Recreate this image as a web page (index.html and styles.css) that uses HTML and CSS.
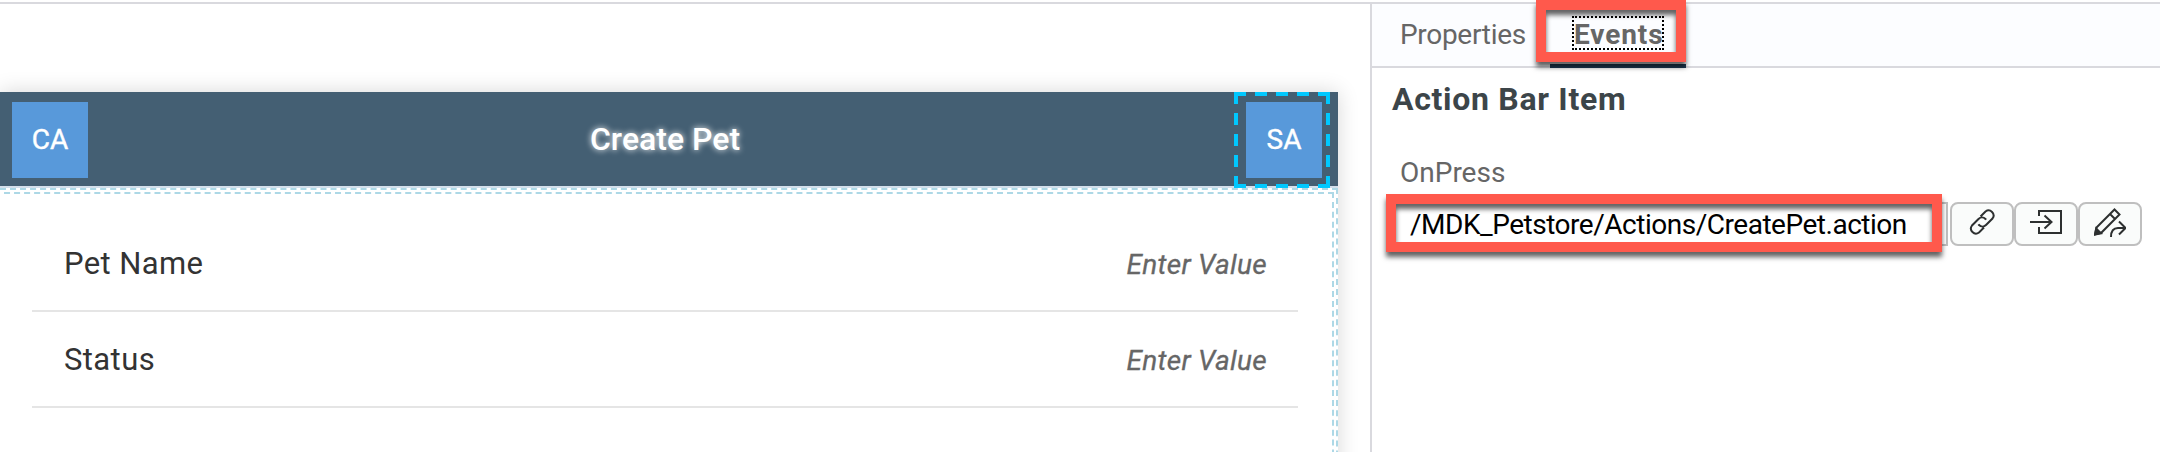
FILE: index.html
```
<!DOCTYPE html>
<html lang="en">
<head>
<meta charset="utf-8">
<title>Create Pet</title>
<link rel="stylesheet" href="styles.css">
</head>
<body>
<div class="app">
  <main class="canvas">
    <section class="page">
      <header class="action-bar">
        <div class="bar-item">CA</div>
        <h1 class="page-title">Create Pet</h1>
        <div class="bar-slot"><div class="bar-item">SA</div></div>
      </header>
      <div class="section-outer">
        <div class="section-inner">
          <div class="field"><span class="field-name">Pet Name</span><span class="field-value">Enter Value</span></div>
          <div class="field"><span class="field-name">Status</span><span class="field-value">Enter Value</span></div>
        </div>
      </div>
    </section>
  </main>
  <aside class="panel">
    <nav class="tabs">
      <span class="tab">Properties</span>
      <span class="tab-active"><span class="tab-focus">Events</span><span class="callout callout-tab"></span></span>
    </nav>
    <h2 class="panel-title">Action Bar Item</h2>
    <label class="event-label">OnPress</label>
    <div class="event-row">
      <div class="event-input"><span class="event-text">/MDK_Petstore/Actions/CreatePet.action</span><span class="callout callout-input"></span></div>
      <button class="tool"><svg width="32" height="32" viewBox="0 0 32 32"><path d="M14.500 8.500L19.500 3.500A5 5 0 0 1 26.500 10.500L20 17A5 5 0 0 1 13 17L12.500 16.200M18 19.500L13 24.500A5 5 0 0 1 6 17.500L12.500 11A5 5 0 0 1 19.500 11L20 11.800"/></svg></button>
      <button class="tool"><svg width="32" height="32" viewBox="0 0 32 32"><path d="M9 8V3H31V25H9V19M0 14H21.500M14.500 7.500L21.500 14L14.500 20.500"/></svg></button>
      <button class="tool"><svg width="32" height="32" viewBox="0 0 32 32"><path d="M1 26.500L2.500 19.500L20.500 1.500L25.500 6.500L7.500 24.500ZM16 6L21 11"/><path class="solid" d="M1 26.500L2.200 20.500L7 25.300Z"/><path d="M17 29C17 23 19.500 20 24 20H31M25 13.500L31.500 20L25 26.500"/></svg></button>
    </div>
  </aside>
</div>
</body>
</html>
```
FILE: styles.css
```
* { box-sizing: border-box; }
body {
  margin: 0;
  background: #fff;
  font-family: Roboto, "Liberation Sans", sans-serif;
  font-size: 28px;
  line-height: 34px;
}
.app {
  display: flex;
  height: 452px;
  padding-top: 2px;
  overflow: hidden;
}
.canvas {
  width: 1370px;
  border-top: 2px solid #d9d9de;
  padding-top: 88px;
  overflow: hidden;
}
.page {
  width: 1338px;
  height: 500px;
  background: #fff;
  box-shadow: 0 0 20px rgba(0, 0, 0, 0.16);
}
.action-bar {
  display: flex;
  justify-content: space-between;
  align-items: center;
  height: 96px;
  padding: 0 8px 0 12px;
  background: #445f73;
  border-bottom: 2px solid #d3dfeb;
  color: #fff;
}
.bar-item {
  width: 76px;
  height: 76px;
  margin-top: 2px;
  background: #5899da;
  line-height: 76px;
  text-align: center;
  -webkit-text-stroke: 0.4px #fff;
}
.bar-slot {
  --dash: #00c8ff 0 12px, transparent 12px 21px;
  width: 96px;
  height: 96px;
  margin-bottom: -2px;
  padding: 8px 12px;
  background:
    repeating-linear-gradient(90deg, var(--dash)) 0 0 / 100% 4px no-repeat,
    repeating-linear-gradient(90deg, var(--dash)) 0 100% / 100% 4px no-repeat,
    repeating-linear-gradient(180deg, var(--dash)) 0 0 / 4px 100% no-repeat,
    repeating-linear-gradient(180deg, var(--dash)) 100% 0 / 4px 100% no-repeat;
}
.page-title {
  margin: 0 0 0 8px;
  flex: 1;
  text-align: center;
  font-size: 32px;
  font-weight: 500;
  text-shadow: 0 0 6px #fff;
}
.section-outer {
  height: 420px;
  margin-left: -10px;
  border: 2px dashed #add8e6;
  padding: 2px;
}
.section-inner {
  height: 412px;
  border: 2px dashed #add8e6;
  padding: 22px 34px 0 36px;
}
.field {
  display: flex;
  justify-content: space-between;
  align-items: center;
  height: 96px;
  padding: 2px 31px 0 32px;
  border-bottom: 2px solid #e5e5e5;
}
.field-name {
  color: #333;
  font-size: 31px;
  letter-spacing: 0.4px;
}
.field-value {
  padding-top: 2px;
  color: #666;
  font-style: italic;
  letter-spacing: 0.3px;
  -webkit-text-stroke: 0.3px #666;
}
.panel {
  flex: 1;
  border-top: 2px solid #d9d9de;
  border-left: 2px solid #d9d9de;
}
.tabs {
  display: flex;
  height: 64px;
  padding-left: 28px;
  background: #fcfdff;
  border-bottom: 2px solid #d9d9de;
  color: #666;
}
.tab {
  width: 150px;
  padding-top: 14px;
  letter-spacing: -0.3px;
}
.tab-active {
  position: relative;
  width: 136px;
  height: 64px;
  padding: 12px 22px;
  border-bottom: 4px solid #1f3a54;
  font-weight: 700;
}
.tab-focus {
  display: block;
  width: 92px;
  height: 34px;
  border: 2px dotted #000;
  line-height: 33px;
  letter-spacing: 0.9px;
  white-space: nowrap;
}
.callout {
  position: absolute;
  border: 10px solid #ff594c;
  box-shadow: 0 5px 5px rgba(0, 0, 0, 0.62), inset 0 5px 5px rgba(0, 0, 0, 0.62);
}
.callout-tab {
  left: -14px;
  top: -4px;
  width: 150px;
  height: 62px;
}
.panel-title {
  margin: 13px 0 0 20px;
  color: #3c4549;
  font-size: 32px;
  line-height: 36px;
  letter-spacing: 0.7px;
}
.event-label {
  display: block;
  margin: 39px 0 0 28px;
  color: #666;
}
.event-row {
  display: flex;
  margin: 12px 0 0 28px;
}
.event-input {
  position: relative;
  width: 548px;
  height: 44px;
  margin-right: 2px;
  padding-left: 10px;
  border: 2px solid #bfbfbf;
  border-left: 0;
  line-height: 42px;
  white-space: nowrap;
}
.event-text {
  color: #000;
  letter-spacing: -0.48px;
}
.callout-input {
  left: -14px;
  top: -10px;
  width: 556px;
  height: 58px;
}
.tool {
  display: flex;
  justify-content: center;
  align-items: center;
  width: 64px;
  height: 44px;
  padding: 0;
  border: 2px solid #bfbfbf;
  border-radius: 8px;
  background: #fafcfb;
}
.tool svg {
  fill: none;
  stroke: #2d3030;
  stroke-width: 2;
}
.tool .solid { fill: #2d3030; }
```
